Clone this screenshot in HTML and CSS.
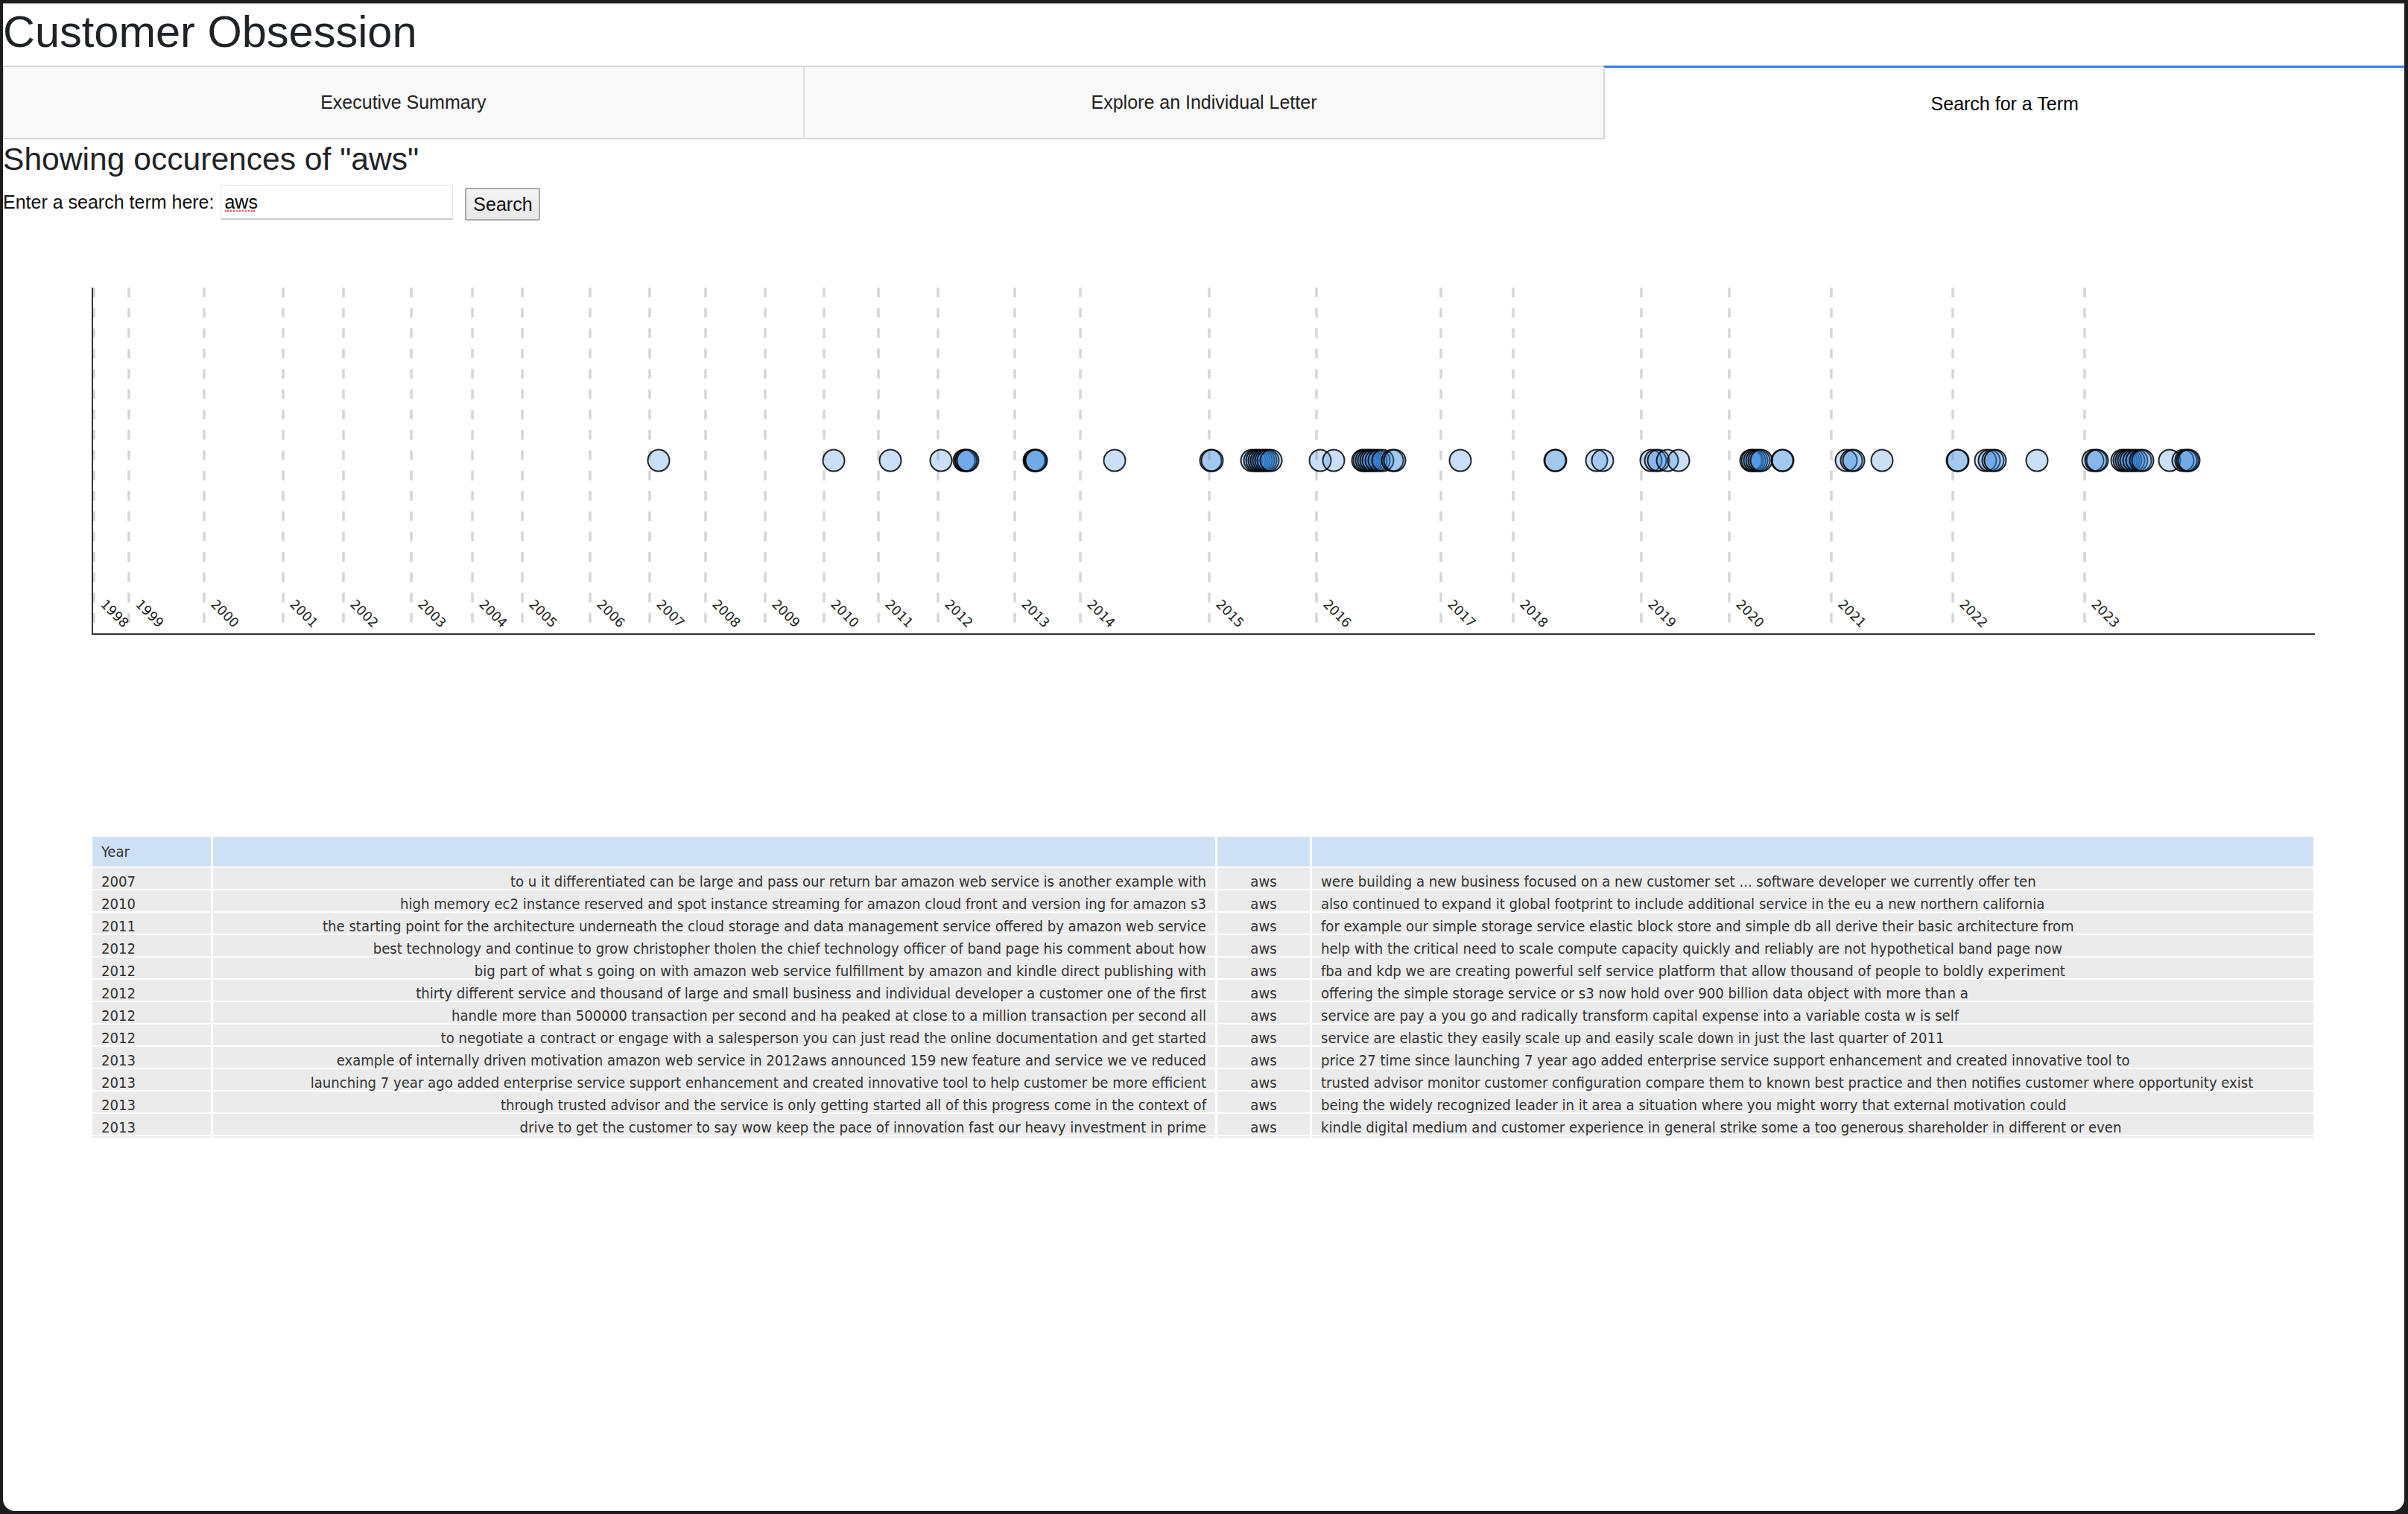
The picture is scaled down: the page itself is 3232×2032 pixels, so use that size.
FILE: index.html
```html
<!DOCTYPE html>
<html lang="en">
<head>
<meta charset="utf-8">
<title>Customer Obsession</title>
<link rel="stylesheet" href="styles.css">
</head>
<body>
<div class="frame">
  <h1 class="title">Customer Obsession</h1>
  <div class="tabs">
    <div class="tab">Executive Summary</div>
    <div class="tab">Explore an Individual Letter</div>
    <div class="tab tab--selected">Search for a Term</div>
  </div>
  <h2 class="heading">Showing occurences of "aws"</h2>
  <div class="search-row">
    <label class="search-label" for="term">Enter a search term here:</label>
    <span class="input-wrap"><input id="term" class="search-input" type="text" value="aws"></span>
    <button class="search-btn" type="button">Search</button>
  </div>
  <svg class="chart" width="3223" height="827" viewBox="4 296 3223 827" xmlns="http://www.w3.org/2000/svg">
    <g class="grid">
      <line x1="126" y1="386" x2="126" y2="851"/>
      <line x1="173" y1="386" x2="173" y2="851"/>
      <line x1="274" y1="386" x2="274" y2="851"/>
      <line x1="380" y1="386" x2="380" y2="851"/>
      <line x1="461" y1="386" x2="461" y2="851"/>
      <line x1="552" y1="386" x2="552" y2="851"/>
      <line x1="634" y1="386" x2="634" y2="851"/>
      <line x1="701" y1="386" x2="701" y2="851"/>
      <line x1="792" y1="386" x2="792" y2="851"/>
      <line x1="872" y1="386" x2="872" y2="851"/>
      <line x1="947" y1="386" x2="947" y2="851"/>
      <line x1="1027" y1="386" x2="1027" y2="851"/>
      <line x1="1106" y1="386" x2="1106" y2="851"/>
      <line x1="1179" y1="386" x2="1179" y2="851"/>
      <line x1="1259" y1="386" x2="1259" y2="851"/>
      <line x1="1362" y1="386" x2="1362" y2="851"/>
      <line x1="1450" y1="386" x2="1450" y2="851"/>
      <line x1="1623" y1="386" x2="1623" y2="851"/>
      <line x1="1767" y1="386" x2="1767" y2="851"/>
      <line x1="1934" y1="386" x2="1934" y2="851"/>
      <line x1="2031" y1="386" x2="2031" y2="851"/>
      <line x1="2203" y1="386" x2="2203" y2="851"/>
      <line x1="2321" y1="386" x2="2321" y2="851"/>
      <line x1="2458" y1="386" x2="2458" y2="851"/>
      <line x1="2621" y1="386" x2="2621" y2="851"/>
      <line x1="2798" y1="386" x2="2798" y2="851"/>
    </g>
    <g class="years">
      <text transform="translate(134 812) rotate(45)">1998</text>
      <text transform="translate(181 812) rotate(45)">1999</text>
      <text transform="translate(282 812) rotate(45)">2000</text>
      <text transform="translate(388 812) rotate(45)">2001</text>
      <text transform="translate(469 812) rotate(45)">2002</text>
      <text transform="translate(560 812) rotate(45)">2003</text>
      <text transform="translate(642 812) rotate(45)">2004</text>
      <text transform="translate(709 812) rotate(45)">2005</text>
      <text transform="translate(800 812) rotate(45)">2006</text>
      <text transform="translate(880 812) rotate(45)">2007</text>
      <text transform="translate(955 812) rotate(45)">2008</text>
      <text transform="translate(1035 812) rotate(45)">2009</text>
      <text transform="translate(1114 812) rotate(45)">2010</text>
      <text transform="translate(1187 812) rotate(45)">2011</text>
      <text transform="translate(1267 812) rotate(45)">2012</text>
      <text transform="translate(1370 812) rotate(45)">2013</text>
      <text transform="translate(1458 812) rotate(45)">2014</text>
      <text transform="translate(1631 812) rotate(45)">2015</text>
      <text transform="translate(1775 812) rotate(45)">2016</text>
      <text transform="translate(1942 812) rotate(45)">2017</text>
      <text transform="translate(2039 812) rotate(45)">2018</text>
      <text transform="translate(2211 812) rotate(45)">2019</text>
      <text transform="translate(2329 812) rotate(45)">2020</text>
      <text transform="translate(2466 812) rotate(45)">2021</text>
      <text transform="translate(2629 812) rotate(45)">2022</text>
      <text transform="translate(2806 812) rotate(45)">2023</text>
    </g>
    <g class="axes">
      <line x1="124" y1="386" x2="124" y2="852"/>
      <line x1="123" y1="851" x2="3107" y2="851"/>
    </g>
    <g class="dots">
      <circle cx="884" cy="618" r="14.5"/>
      <circle cx="1119" cy="618" r="14.5"/>
      <circle cx="1195" cy="618" r="14.5"/>
      <circle cx="1263" cy="618" r="14.5"/>
      <circle cx="1294" cy="618" r="14.5"/>
      <circle cx="1296" cy="618" r="14.5"/>
      <circle cx="1297" cy="618" r="14.5"/>
      <circle cx="1299" cy="618" r="14.5"/>
      <circle cx="1388" cy="618" r="14.5"/>
      <circle cx="1389" cy="618" r="14.5"/>
      <circle cx="1390" cy="618" r="14.5"/>
      <circle cx="1391" cy="618" r="14.5"/>
      <circle cx="1496" cy="618" r="14.5"/>
      <circle cx="1625" cy="618" r="14.5"/>
      <circle cx="1627" cy="618" r="14.5"/>
      <circle cx="1680" cy="618" r="14.5"/>
      <circle cx="1684" cy="618" r="14.5"/>
      <circle cx="1687" cy="618" r="14.5"/>
      <circle cx="1690" cy="618" r="14.5"/>
      <circle cx="1693" cy="618" r="14.5"/>
      <circle cx="1696" cy="618" r="14.5"/>
      <circle cx="1699" cy="618" r="14.5"/>
      <circle cx="1702" cy="618" r="14.5"/>
      <circle cx="1706" cy="618" r="14.5"/>
      <circle cx="1772" cy="618" r="14.5"/>
      <circle cx="1790" cy="618" r="14.5"/>
      <circle cx="1829" cy="618" r="14.5"/>
      <circle cx="1831" cy="618" r="14.5"/>
      <circle cx="1834" cy="618" r="14.5"/>
      <circle cx="1837" cy="618" r="14.5"/>
      <circle cx="1840" cy="618" r="14.5"/>
      <circle cx="1843" cy="618" r="14.5"/>
      <circle cx="1847" cy="618" r="14.5"/>
      <circle cx="1851" cy="618" r="14.5"/>
      <circle cx="1856" cy="618" r="14.5"/>
      <circle cx="1869" cy="618" r="14.5"/>
      <circle cx="1872" cy="618" r="14.5"/>
      <circle cx="1960" cy="618" r="14.5"/>
      <circle cx="2087" cy="618" r="14.5"/>
      <circle cx="2088" cy="618" r="14.5"/>
      <circle cx="2143" cy="618" r="14.5"/>
      <circle cx="2151" cy="618" r="14.5"/>
      <circle cx="2216" cy="618" r="14.5"/>
      <circle cx="2222" cy="618" r="14.5"/>
      <circle cx="2226" cy="618" r="14.5"/>
      <circle cx="2238" cy="618" r="14.5"/>
      <circle cx="2253" cy="618" r="14.5"/>
      <circle cx="2350" cy="618" r="14.5"/>
      <circle cx="2352" cy="618" r="14.5"/>
      <circle cx="2355" cy="618" r="14.5"/>
      <circle cx="2358" cy="618" r="14.5"/>
      <circle cx="2361" cy="618" r="14.5"/>
      <circle cx="2364" cy="618" r="14.5"/>
      <circle cx="2392" cy="618" r="14.5"/>
      <circle cx="2393" cy="618" r="14.5"/>
      <circle cx="2478" cy="618" r="14.5"/>
      <circle cx="2485" cy="618" r="14.5"/>
      <circle cx="2488" cy="618" r="14.5"/>
      <circle cx="2526" cy="618" r="14.5"/>
      <circle cx="2627" cy="618" r="14.5"/>
      <circle cx="2628" cy="618" r="14.5"/>
      <circle cx="2665" cy="618" r="14.5"/>
      <circle cx="2670" cy="618" r="14.5"/>
      <circle cx="2675" cy="618" r="14.5"/>
      <circle cx="2678" cy="618" r="14.5"/>
      <circle cx="2734" cy="618" r="14.5"/>
      <circle cx="2809" cy="618" r="14.5"/>
      <circle cx="2813" cy="618" r="14.5"/>
      <circle cx="2815" cy="618" r="14.5"/>
      <circle cx="2848" cy="618" r="14.5"/>
      <circle cx="2851" cy="618" r="14.5"/>
      <circle cx="2854" cy="618" r="14.5"/>
      <circle cx="2857" cy="618" r="14.5"/>
      <circle cx="2860" cy="618" r="14.5"/>
      <circle cx="2864" cy="618" r="14.5"/>
      <circle cx="2868" cy="618" r="14.5"/>
      <circle cx="2873" cy="618" r="14.5"/>
      <circle cx="2876" cy="618" r="14.5"/>
      <circle cx="2912" cy="618" r="14.5"/>
      <circle cx="2930" cy="618" r="14.5"/>
      <circle cx="2934" cy="618" r="14.5"/>
      <circle cx="2936" cy="618" r="14.5"/>
      <circle cx="2938" cy="618" r="14.5"/>
    </g>
  </svg>
  <div class="table-wrap">
    <div class="kwic">
      <div class="hcell">Year</div><div class="hcell"></div><div class="hcell"></div><div class="hcell"></div>

      <div class="cell">2007</div><div class="cell right">to u it differentiated can be large and pass our return bar amazon web service is another example with</div><div class="cell center">aws</div><div class="cell">were building a new business focused on a new customer set ... software developer we currently offer ten</div>

      <div class="cell">2010</div><div class="cell right">high memory ec2 instance reserved and spot instance streaming for amazon cloud front and version ing for amazon s3</div><div class="cell center">aws</div><div class="cell">also continued to expand it global footprint to include additional service in the eu a new northern california</div>

      <div class="cell">2011</div><div class="cell right">the starting point for the architecture underneath the cloud storage and data management service offered by amazon web service</div><div class="cell center">aws</div><div class="cell">for example our simple storage service elastic block store and simple db all derive their basic architecture from</div>

      <div class="cell">2012</div><div class="cell right">best technology and continue to grow christopher tholen the chief technology officer of band page his comment about how</div><div class="cell center">aws</div><div class="cell">help with the critical need to scale compute capacity quickly and reliably are not hypothetical band page now</div>

      <div class="cell">2012</div><div class="cell right">big part of what s going on with amazon web service fulfillment by amazon and kindle direct publishing with</div><div class="cell center">aws</div><div class="cell">fba and kdp we are creating powerful self service platform that allow thousand of people to boldly experiment</div>

      <div class="cell">2012</div><div class="cell right">thirty different service and thousand of large and small business and individual developer a customer one of the first</div><div class="cell center">aws</div><div class="cell">offering the simple storage service or s3 now hold over 900 billion data object with more than a</div>

      <div class="cell">2012</div><div class="cell right">handle more than 500000 transaction per second and ha peaked at close to a million transaction per second all</div><div class="cell center">aws</div><div class="cell">service are pay a you go and radically transform capital expense into a variable costa w is self</div>

      <div class="cell">2012</div><div class="cell right">to negotiate a contract or engage with a salesperson you can just read the online documentation and get started</div><div class="cell center">aws</div><div class="cell">service are elastic they easily scale up and easily scale down in just the last quarter of 2011</div>

      <div class="cell">2013</div><div class="cell right">example of internally driven motivation amazon web service in 2012aws announced 159 new feature and service we ve reduced</div><div class="cell center">aws</div><div class="cell">price 27 time since launching 7 year ago added enterprise service support enhancement and created innovative tool to</div>

      <div class="cell">2013</div><div class="cell right">launching 7 year ago added enterprise service support enhancement and created innovative tool to help customer be more efficient</div><div class="cell center">aws</div><div class="cell">trusted advisor monitor customer configuration compare them to known best practice and then notifies customer where opportunity exist</div>

      <div class="cell">2013</div><div class="cell right">through trusted advisor and the service is only getting started all of this progress come in the context of</div><div class="cell center">aws</div><div class="cell">being the widely recognized leader in it area a situation where you might worry that external motivation could</div>

      <div class="cell">2013</div><div class="cell right">drive to get the customer to say wow keep the pace of innovation fast our heavy investment in prime</div><div class="cell center">aws</div><div class="cell">kindle digital medium and customer experience in general strike some a too generous shareholder in different or even</div>

      <div class="cell"></div><div class="cell"></div><div class="cell"></div><div class="cell"></div>
    </div>
  </div>
</div>
</body>
</html>
```

FILE: styles.css
```css
html, body {
  margin: 0;
  padding: 0;
  background: #1d1d1f;
}

.frame {
  box-sizing: border-box;
  width: 3223px;
  height: 2024px;
  margin: 4px 5px 4px 4px;
  background: #ffffff;
  border-top: 1px solid #8c8c8c;
  border-radius: 0 0 16px 16px;
  overflow: hidden;
  font-family: "Liberation Sans", Arial, sans-serif;
  color: #212529;
}

.title {
  margin: 3px 0 0;
  font-size: 59.5px;
  font-weight: 400;
  line-height: 70px;
  color: #1f2327;
}

.tabs {
  display: flex;
  margin-top: 10px;
  height: 99px;
}

.tab {
  flex: 1;
  box-sizing: border-box;
  display: flex;
  align-items: center;
  justify-content: center;
  background: #f9f9f9;
  border-top: 2px solid #d6d6d6;
  border-bottom: 2px solid #d6d6d6;
  border-left: 2px solid #dedede;
  font-size: 25px;
  color: #222;
}

.tab:first-child {
  border-left: 1px solid #d6d6d6;
}

.tab--selected {
  background: #ffffff;
  border-top: 3px solid #3480f6;
  border-bottom: 0;
  border-left: 2px solid #d6d6d6;
  color: #000;
}

.heading {
  margin: 0;
  font-size: 42.6px;
  font-weight: 400;
  line-height: 53px;
  color: #1f2327;
}

.search-row {
  display: flex;
  align-items: flex-start;
  height: 48px;
  margin-top: 8px;
}

.search-label {
  font-size: 25px;
  line-height: 47px;
  margin-right: 9px;
  color: #111;
}

.input-wrap {
  position: relative;
  display: block;
}

.input-wrap::after {
  content: "";
  position: absolute;
  left: 6px;
  top: 34px;
  width: 40px;
  border-bottom: 2px dotted #e5484d;
}

.search-input {
  box-sizing: border-box;
  display: block;
  width: 312px;
  height: 47px;
  margin: 0;
  padding: 0 4px;
  border: 1px solid #e4e4e4;
  border-bottom: 2px solid #cdcdcd;
  font-family: "Liberation Sans", Arial, sans-serif;
  font-size: 25px;
  color: #000;
  background: #fff;
  outline: none;
}

.search-btn {
  box-sizing: border-box;
  width: 101px;
  height: 44px;
  margin: 4px 0 0 16px;
  padding: 0;
  border: 2px solid #a9a9a9;
  border-radius: 2px;
  background: linear-gradient(#f4f4f4, #e8e8e8);
  font-family: "Liberation Sans", Arial, sans-serif;
  font-size: 25px;
  color: #111;
}

.chart {
  display: block;
}

.grid line {
  stroke: #d6d6d6;
  stroke-width: 3.5;
  stroke-dasharray: 13 14.3;
}

.axes line {
  stroke: #333;
  stroke-width: 2;
}

.years text {
  font-family: "DejaVu Sans", Verdana, sans-serif;
  font-size: 17.5px;
  fill: #222;
}

.dots circle {
  fill: rgb(49, 130, 220);
  fill-opacity: 0.25;
  stroke: #000;
  stroke-width: 2;
  stroke-opacity: 0.85;
}

.table-wrap {
  margin-left: 120px;
  width: 2981px;
  height: 404px;
  overflow: hidden;
}

.kwic {
  display: grid;
  grid-template-columns: 159px 1345px 124px 1344px;
  column-gap: 3px;
  row-gap: 2px;
  font-family: "DejaVu Sans Condensed", "DejaVu Sans", sans-serif;
  font-size: 20.1px;
  color: #333;
}

.hcell {
  box-sizing: border-box;
  height: 40px;
  line-height: 40px;
  padding: 0 12px;
  background: #cfe2f5;
  color: #333;
}

.cell {
  box-sizing: border-box;
  height: 28px;
  line-height: 20px;
  padding: 8px 12px 0;
  background: #ebebeb;
  white-space: nowrap;
}

.right {
  text-align: right;
}

.center {
  text-align: center;
}
```
